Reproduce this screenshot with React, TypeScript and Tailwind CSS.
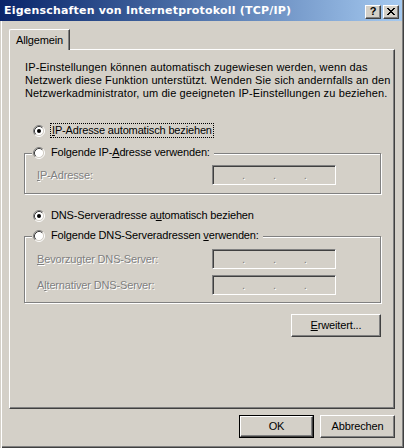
import React from 'react';

function Radio({ checked }: { checked?: boolean }) {
  return (
    <svg width="12" height="12" viewBox="0 0 12 12" className="shrink-0">
      <circle cx="6" cy="6" r="4.5" fill="#fff" />
      <path d="M2.11 9.89A5.5 5.5 0 0 1 9.89 2.11" fill="none" stroke="#808080" />
      <path d="M9.89 2.11A5.5 5.5 0 0 1 2.11 9.89" fill="none" stroke="#fff" />
      <path d="M2.82 9.18A4.5 4.5 0 0 1 9.18 2.82" fill="none" stroke="#404040" />
      <path d="M9.18 2.82A4.5 4.5 0 0 1 2.82 9.18" fill="none" stroke="#d4d0c8" />
      {checked && <circle cx="6" cy="6" r="2" fill="#000" />}
    </svg>
  );
}

const U = ({ children }: { children: React.ReactNode }) => (
  <span className="underline underline-offset-[1px]">{children}</span>
);

const disabled = 'text-[#808080] [text-shadow:1px_1px_0_#fff]';

function IpField() {
  return (
    <div
      className={
        'w-[124px] h-[20px] shrink-0 border border-t-[#808080] border-l-[#808080] border-r-white border-b-white shadow-[inset_1px_1px_0_#404040] flex items-center pl-[29px] gap-[28px] leading-[13px] ' +
        disabled
      }
    >
      <span>.</span>
      <span>.</span>
      <span>.</span>
    </div>
  );
}

function Group({
  label,
  height,
  children,
}: {
  label: React.ReactNode;
  height: string;
  children: React.ReactNode;
}) {
  return (
    <div
      className={
        'relative w-[357px] border border-[#808080] shadow-[inset_1px_1px_0_#fff,1px_1px_0_#fff] ' + height
      }
    >
      <div className="absolute left-[7px] -top-[8px] h-[13px] flex items-center gap-[6px] bg-[#d4d0c8] pl-[1px] pr-[4px] leading-[13px]">
        <Radio />
        <span>{label}</span>
      </div>
      {children}
    </div>
  );
}

function Button({ children, isDefault }: { children: React.ReactNode; isDefault?: boolean }) {
  const inner = (
    <div className="w-full h-full flex items-center justify-center border border-t-white border-l-white border-r-[#404040] border-b-[#404040] shadow-[inset_-1px_-1px_0_#808080]">
      {children}
    </div>
  );
  return isDefault ? (
    <div className="w-[75px] h-[23px] border border-black">{inner}</div>
  ) : (
    <div className="w-[75px] h-[23px]">{inner}</div>
  );
}

export default function App() {
  return (
    <div className="w-[404px] h-[448px] bg-[#d4d0c8] text-black text-[11px] leading-[13px] tracking-[-0.15px] [font-family:'Liberation_Sans',Arial,sans-serif] flex flex-col shadow-[inset_1px_0_0_#d4d0c8,inset_2px_0_0_#fff,inset_-1px_-1px_0_#404040,inset_-2px_-2px_0_#808080] overflow-hidden">
      {/* title bar */}
      <div className="h-[21px] w-[402px] bg-gradient-to-r from-[#0a246a] to-[#a6caf0] flex items-center pl-[4px] pr-[3px]">
        <span className="text-white font-bold text-[11px] tracking-[0.2px] flex-1 [font-family:'DejaVu_Sans',sans-serif]">
          Eigenschaften von Internetprotokoll (TCP/IP)
        </span>
        <div className="flex gap-[2px] mt-[2px]">
          <div className="w-[16px] h-[14px] bg-[#d4d0c8] border border-t-white border-l-white border-r-[#404040] border-b-[#404040] shadow-[inset_-1px_-1px_0_#808080] flex items-center justify-center font-bold text-[11px] leading-none">
            ?
          </div>
          <div className="w-[16px] h-[14px] bg-[#d4d0c8] border border-t-white border-l-white border-r-[#404040] border-b-[#404040] shadow-[inset_-1px_-1px_0_#808080] flex items-center justify-center">
            <svg width="8" height="7" viewBox="0 0 8 7" shapeRendering="crispEdges">
              <path d="M0 0h2v1h-2zM6 0h2v1h-2zM1 1h2v1h-2zM5 1h2v1h-2zM2 2h4v1h-4zM3 3h2v1h-2zM2 4h4v1h-4zM1 5h2v1h-2zM5 5h2v1h-2zM0 6h2v1h-2zM6 6h2v1h-2z" fill="#000" />
            </svg>
          </div>
        </div>
      </div>

      <div className="pl-[9px] pt-[8px]">
        {/* tab */}
        <div className="relative z-10 w-[61px] h-[21px] bg-[#d4d0c8] border-t border-l border-r border-t-white border-l-white border-r-[#404040] rounded-tl-[2px] shadow-[inset_-1px_0_0_#808080] flex items-center pl-[6px]">
          Allgemein
        </div>
        {/* panel */}
        <div className="-mt-[1px] w-[386px] h-[360px] border border-t-white border-l-white border-r-[#404040] border-b-[#404040] shadow-[inset_-1px_-1px_0_#808080] pl-[14px] pt-[11px]">
          <p className="ml-[1px] tracking-[0.12px]">
            IP-Einstellungen können automatisch zugewiesen werden, wenn das
            <br />
            Netzwerk diese Funktion unterstützt. Wenden Sie sich andernfalls an den
            <br />
            Netzwerkadministrator, um die geeigneten IP-Einstellungen zu beziehen.
          </p>

          <div className="mt-[23px] ml-[9px] h-[15px] flex items-center gap-[5px]">
            <Radio checked />
            <span className="border border-dotted border-black px-[1px] leading-[13px]">
              <U>I</U>P-Adresse automatisch beziehen
            </span>
          </div>

          <div className="mt-[15px]">
            <Group
              height="h-[41px]"
              label={
                <>
                  Folgende IP-<U>A</U>dresse verwenden:
                </>
              }
            >
              <div className="flex items-center pt-[11px] pl-[12px]">
                <span className={'w-[175px] ' + disabled}>
                  <U>I</U>P-Adresse:
                </span>
                <IpField />
              </div>
            </Group>
          </div>

          <div className="mt-[15px] ml-[9px] h-[13px] flex items-center gap-[6px]">
            <Radio checked />
            <span>
              DNS-Serveradresse a<U>u</U>tomatisch beziehen
            </span>
          </div>

          <div className="mt-[14px]">
            <Group
              height="h-[67px]"
              label={
                <>
                  Folgende DNS-Serveradressen <U>v</U>erwenden:
                </>
              }
            >
              <div className="flex flex-col gap-[6px] pt-[12px] pl-[12px]">
                <div className="flex items-center">
                  <span className={'w-[175px] ' + disabled}>
                    <U>B</U>evorzugter DNS-Server:
                  </span>
                  <IpField />
                </div>
                <div className="flex items-center">
                  <span className={'w-[175px] ' + disabled}>
                    A<U>l</U>ternativer DNS-Server:
                  </span>
                  <IpField />
                </div>
              </div>
            </Group>
          </div>

          <div className="w-[357px] flex justify-end mt-[11px]">
            <div className="w-[90px] h-[23px] flex items-center justify-center border border-t-white border-l-white border-r-[#404040] border-b-[#404040] shadow-[inset_-1px_-1px_0_#808080]">
              <span>
                <U>E</U>rweitert...
              </span>
            </div>
          </div>
        </div>
      </div>

      {/* dialog buttons */}
      <div className="flex justify-end gap-[6px] mt-[6px] pr-[9px]">
        <Button isDefault>OK</Button>
        <Button>Abbrechen</Button>
      </div>
    </div>
  );
}
